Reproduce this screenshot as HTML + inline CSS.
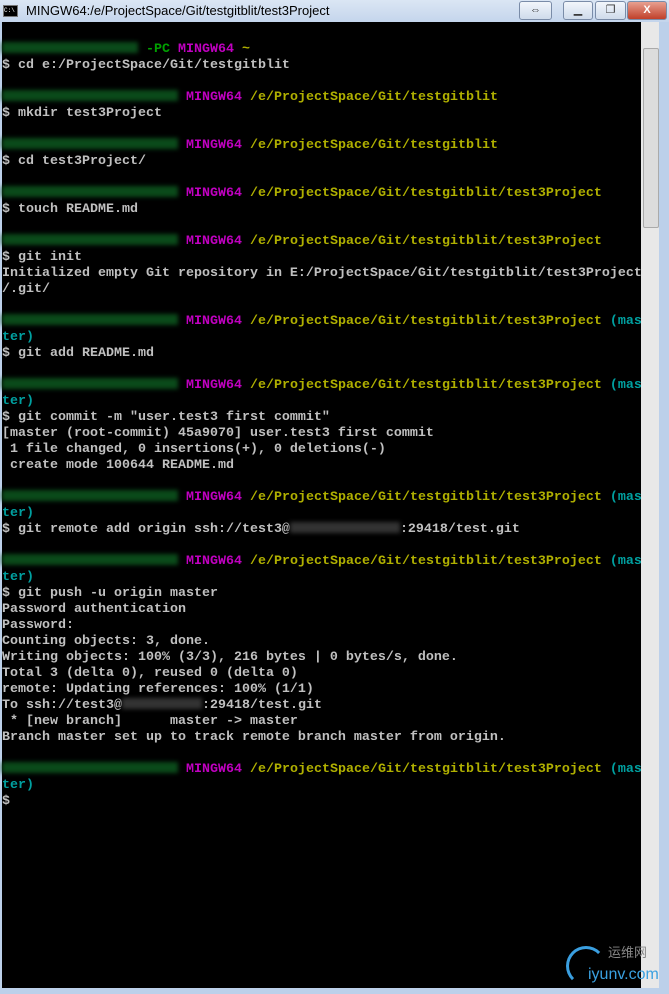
<!DOCTYPE html>
<html><head><meta charset="utf-8"><style>
body{margin:0;width:669px;height:994px;background:#bcd0ea;overflow:hidden;position:relative;font-family:"Liberation Sans",sans-serif}
#title{position:absolute;left:0;top:0;width:669px;height:22px;background:linear-gradient(#dbe6f4,#c4d5ec)}
#title .t{position:absolute;left:26px;top:3px;font-size:13px;color:#000}
#icon{position:absolute;left:3px;top:5px;width:13px;height:10px;background:#000;border:1px solid #777;color:#fff;font:6px "Liberation Mono",monospace;line-height:10px}
.btn{position:absolute;top:1px;height:17px;border:1px solid #7a8ca8;border-radius:3px;background:linear-gradient(#f2f6fb,#cfdbeb);font-size:11px;text-align:center;line-height:17px;color:#333}
#term{position:absolute;left:2px;top:22px;width:639px;height:966px;background:#000}
#sb{position:absolute;left:641px;top:22px;width:18px;height:966px;background:#e8e8e8}
#thumb{position:absolute;left:643px;top:48px;width:14px;height:178px;background:#dcdcdc;border:1px solid #aaa;border-radius:2px}
pre{position:absolute;left:2px;top:26px;margin:0;font:bold 13.33px/16px "Liberation Mono",monospace;color:#c0c0c0;white-space:pre}
.g{color:#00a000}.m{color:#c000c0}.y{color:#b0b000}.c{color:#00a0a0}
.blur{display:inline-block;width:176px;height:11px;background:#0a4a1a;filter:blur(2px);vertical-align:-1px;margin-right:8px}
.bl2{display:inline-block;width:110px;height:11px;background:#333;filter:blur(2px);vertical-align:-1px}
#wm{position:absolute;left:588px;top:966px;font-size:16px;color:#3aa0e0}
#wm2{position:absolute;left:608px;top:942px;font-size:13px;color:#888}
#logo{position:absolute;left:566px;top:946px;width:34px;height:34px;border-radius:50%;border:3px solid #3a9fe0;border-right-color:transparent;border-bottom-color:transparent}
</style></head><body>
<div id="title"><div id="icon">C:\</div><div class="t">MINGW64:/e/ProjectSpace/Git/testgitblit/test3Project</div>
<div class="btn" style="left:519px;width:31px">⇔</div>
<div class="btn" style="left:563px;width:28px">▁</div>
<div class="btn" style="left:595px;width:29px">❐</div>
<div class="btn" style="left:627px;width:38px;background:linear-gradient(#e8a090,#c0402a);color:#fff;font-weight:bold">X</div>
</div>
<div id="term"></div><div id="sb"></div><div id="thumb"></div>
<pre>

<span class="blur" style="width:136px;margin-right:8px"></span><span class="g">-PC</span> <span class="m">MINGW64</span> <span class="y">~</span>
$ cd e:/ProjectSpace/Git/testgitblit

<span class="blur"></span><span class="m">MINGW64</span> <span class="y">/e/ProjectSpace/Git/testgitblit</span>
$ mkdir test3Project

<span class="blur"></span><span class="m">MINGW64</span> <span class="y">/e/ProjectSpace/Git/testgitblit</span>
$ cd test3Project/

<span class="blur"></span><span class="m">MINGW64</span> <span class="y">/e/ProjectSpace/Git/testgitblit/test3Project</span>
$ touch README.md

<span class="blur"></span><span class="m">MINGW64</span> <span class="y">/e/ProjectSpace/Git/testgitblit/test3Project</span>
$ git init
Initialized empty Git repository in E:/ProjectSpace/Git/testgitblit/test3Project
/.git/

<span class="blur"></span><span class="m">MINGW64</span> <span class="y">/e/ProjectSpace/Git/testgitblit/test3Project</span> <span class="c">(mas
ter)</span>
$ git add README.md

<span class="blur"></span><span class="m">MINGW64</span> <span class="y">/e/ProjectSpace/Git/testgitblit/test3Project</span> <span class="c">(mas
ter)</span>
$ git commit -m "user.test3 first commit"
[master (root-commit) 45a9070] user.test3 first commit
 1 file changed, 0 insertions(+), 0 deletions(-)
 create mode 100644 README.md

<span class="blur"></span><span class="m">MINGW64</span> <span class="y">/e/ProjectSpace/Git/testgitblit/test3Project</span> <span class="c">(mas
ter)</span>
$ git remote add origin ssh://test3@<span class="bl2"></span>:29418/test.git

<span class="blur"></span><span class="m">MINGW64</span> <span class="y">/e/ProjectSpace/Git/testgitblit/test3Project</span> <span class="c">(mas
ter)</span>
$ git push -u origin master
Password authentication
Password:
Counting objects: 3, done.
Writing objects: 100% (3/3), 216 bytes | 0 bytes/s, done.
Total 3 (delta 0), reused 0 (delta 0)
remote: Updating references: 100% (1/1)
To ssh://test3@<span class="bl2" style="width:80px"></span>:29418/test.git
 * [new branch]      master -&gt; master
Branch master set up to track remote branch master from origin.

<span class="blur"></span><span class="m">MINGW64</span> <span class="y">/e/ProjectSpace/Git/testgitblit/test3Project</span> <span class="c">(mas
ter)</span>
$
</pre>
<div id="logo"></div>
<div id="wm2">运维网</div>
<div id="wm">iyunv.com</div>
</body></html>
